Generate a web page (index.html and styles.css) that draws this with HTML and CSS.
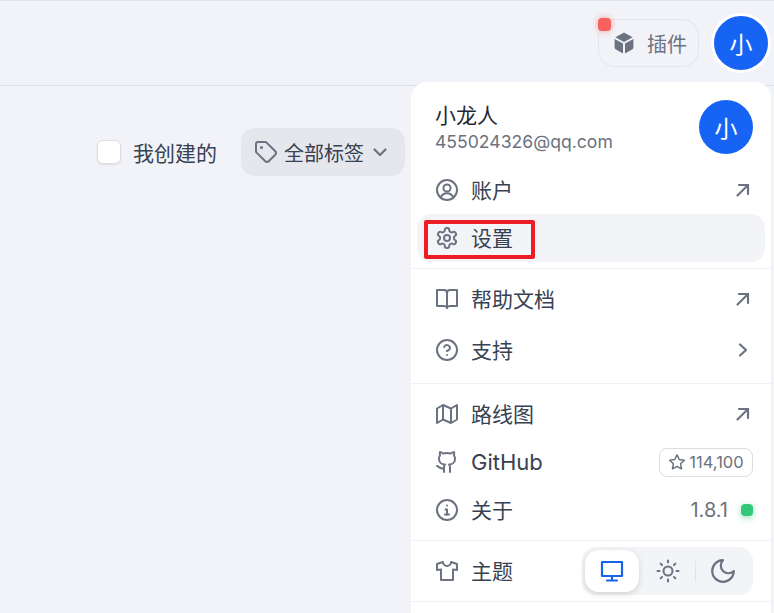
FILE: index.html
```html
<!DOCTYPE html>
<html lang="zh-CN">
<head>
    <meta charset="UTF-8">
    <meta name="viewport" content="width=device-width, initial-scale=1.0">
    <title>插件</title>
    <link rel="stylesheet" href="styles.css">
</head>
<body>

    <header class="topbar">
        <div class="plugin-btn">
            <span class="red-dot"></span>
            <svg class="icon" viewBox="0 0 24 24" fill="currentColor"><path d="M12 1.600 20.600 6.200 12 10.900 3.400 6.200Z"/><path d="M2.600 8 11 12.600V22.600L3.600 18.200a2 2 0 0 1-1-1.700Z"/><path d="M21.400 8 13 12.600V22.600L20.400 18.200a2 2 0 0 0 1-1.700Z"/></svg>
            <span>插件</span>
        </div>
        <div class="avatar avatar-ring">小</div>
    </header>

    <main class="filters">
        <label class="check">
            <span class="check-box"></span>
            <span>我创建的</span>
        </label>
        <div class="tag-btn">
            <svg class="icon" viewBox="0 0 24 24" fill="none" stroke="currentColor" stroke-width="2" stroke-linecap="round" stroke-linejoin="round"><path d="M12.600 2.600A2 2 0 0 0 11.200 2H4a2 2 0 0 0-2 2v7.200a2 2 0 0 0 .6 1.400l8.700 8.700a2.400 2.400 0 0 0 3.400 0l6.600-6.600a2.400 2.400 0 0 0 0-3.400z"/><circle cx="7.500" cy="7.500" r=".6" fill="currentColor"/></svg>
            <span>全部标签</span>
            <svg class="icon-small" viewBox="4 4 16 16" fill="none" stroke="currentColor" stroke-width="2.200" stroke-linecap="round" stroke-linejoin="round"><path d="m6.500 9.500 5.500 5.500 5.500-5.500"/></svg>
        </div>
    </main>

    <div class="menu">
        <div class="menu-head">
            <div class="user-text">
                <div class="user-name">小龙人</div>
                <div class="user-mail">455024326@qq.com</div>
            </div>
            <div class="avatar">小</div>
        </div>

        <div class="section section-first">
            <div class="row">
                <svg class="icon" viewBox="0 0 24 24" fill="none" stroke="currentColor" stroke-width="2" stroke-linecap="round" stroke-linejoin="round"><circle cx="12" cy="12" r="10"/><circle cx="12" cy="10" r="3.600"/><path d="M5.600 19.400a7 7 0 0 1 12.800 0"/></svg>
                <span class="label">账户</span>
                <svg class="icon-small" viewBox="4 4 16 16" fill="none" stroke="currentColor" stroke-width="2.200" stroke-linecap="round" stroke-linejoin="round"><path d="M6.500 17.500 17 7"/><path d="M8 7h9v9"/></svg>
            </div>
            <div class="row row-active">
                <svg class="icon" viewBox="0 0 24 24" fill="none" stroke="currentColor" stroke-width="2" stroke-linecap="round" stroke-linejoin="round"><path d="M12.220 2h-.44a2 2 0 0 0-2 2v.18a2 2 0 0 1-1 1.730l-.43.25a2 2 0 0 1-2 0l-.15-.08a2 2 0 0 0-2.730.73l-.22.38a2 2 0 0 0 .73 2.730l.15.1a2 2 0 0 1 1 1.720v.51a2 2 0 0 1-1 1.740l-.15.09a2 2 0 0 0-.73 2.730l.22.38a2 2 0 0 0 2.730.73l.15-.08a2 2 0 0 1 2 0l.43.25a2 2 0 0 1 1 1.730V20a2 2 0 0 0 2 2h.44a2 2 0 0 0 2-2v-.18a2 2 0 0 1 1-1.730l.43-.25a2 2 0 0 1 2 0l.15.08a2 2 0 0 0 2.730-.73l.22-.39a2 2 0 0 0-.73-2.730l-.15-.08a2 2 0 0 1-1-1.740v-.5a2 2 0 0 1 1-1.740l.15-.09a2 2 0 0 0 .73-2.730l-.22-.38a2 2 0 0 0-2.730-.73l-.15.08a2 2 0 0 1-2 0l-.43-.25a2 2 0 0 1-1-1.730V4a2 2 0 0 0-2-2z"/><circle cx="12" cy="12" r="3"/></svg>
                <span class="label">设置</span>
            </div>
            <span class="red-box"></span>
        </div>

        <div class="section section-help">
            <div class="row">
                <svg class="icon" viewBox="0 0 24 24" fill="none" stroke="currentColor" stroke-width="2" stroke-linejoin="round"><path d="M2 3h7a3 3 0 0 1 3 3v15a3 3 0 0 0-3-2H2z"/><path d="M22 3h-7a3 3 0 0 0-3 3v15a3 3 0 0 1 3-2h7z"/></svg>
                <span class="label">帮助文档</span>
                <svg class="icon-small" viewBox="4 4 16 16" fill="none" stroke="currentColor" stroke-width="2.200" stroke-linecap="round" stroke-linejoin="round"><path d="M6.500 17.500 17 7"/><path d="M8 7h9v9"/></svg>
            </div>
            <div class="row">
                <svg class="icon" viewBox="0 0 24 24" fill="none" stroke="currentColor" stroke-width="2" stroke-linecap="round" stroke-linejoin="round"><circle cx="12" cy="12" r="10"/><path d="M9.100 9a3 3 0 0 1 5.800 1c0 2-3 3-3 3"/><path d="M12 17h.01"/></svg>
                <span class="label">支持</span>
                <svg class="icon-small" viewBox="4 4 16 16" fill="none" stroke="currentColor" stroke-width="2.200" stroke-linecap="round" stroke-linejoin="round"><path d="m9 6.500 6 5.500-6 5.500"/></svg>
            </div>
        </div>

        <div class="section">
            <div class="row">
                <svg class="icon" viewBox="0 0 24 24" fill="none" stroke="currentColor" stroke-width="2" stroke-linejoin="round"><path d="M2 6.500 8 3l8 3.500L22 3v14.500L16 21l-8-3.500L2 21z"/><path d="M8 3v14.500"/><path d="M16 6.500V21"/></svg>
                <span class="label">路线图</span>
                <svg class="icon-small" viewBox="4 4 16 16" fill="none" stroke="currentColor" stroke-width="2.200" stroke-linecap="round" stroke-linejoin="round"><path d="M6.500 17.500 17 7"/><path d="M8 7h9v9"/></svg>
            </div>
            <div class="row">
                <svg class="icon" viewBox="0 0 24 24" fill="none" stroke="currentColor" stroke-width="2" stroke-linecap="round" stroke-linejoin="round"><path d="M15 22v-4a4.800 4.800 0 0 0-1-3.500c3 0 6-2 6-5.500.08-1.250-.27-2.480-1-3.500.28-1.150.28-2.350 0-3.500 0 0-1 0-3 1.500-2.640-.5-5.360-.5-8 0C6 2 5 2 5 2c-.3 1.150-.3 2.350 0 3.500A5.400 5.400 0 0 0 4 9c0 3.500 3 5.500 6 5.500-.39.490-.68 1.050-.85 1.650-.17.600-.22 1.230-.15 1.850v4"/><path d="M9 18c-4.510 2-5-2-7-2"/></svg>
                <span class="label label-latin">GitHub</span>
                <div class="stars">
                    <svg viewBox="0 0 24 24" fill="none" stroke="currentColor" stroke-width="2" stroke-linejoin="round"><path d="m12 2.500 3 6.200 6.800.9-5 4.700 1.300 6.800-6.100-3.300-6.100 3.300 1.300-6.800-5-4.700 6.800-.9z"/></svg>
                    <span>114,100</span>
                </div>
            </div>
            <div class="row">
                <svg class="icon" viewBox="0 0 24 24" fill="none" stroke="currentColor" stroke-width="2" stroke-linecap="round" stroke-linejoin="round"><circle cx="12" cy="12" r="10"/><path d="M10.500 11.500H12v5"/><path d="M10 16.500h4"/><path d="M12 7.500h.01"/></svg>
                <span class="label">关于</span>
                <span class="version">1.8.1</span>
                <span class="green-dot"></span>
            </div>
        </div>

        <div class="section">
            <div class="row">
                <svg class="icon" viewBox="0 0 24 24" fill="none" stroke="currentColor" stroke-width="2" stroke-linejoin="round"><path d="M8 3 2 5v6l4-.5V21h12V10.500l4 .5V5l-6-2a4 4 0 0 1-8 0z"/></svg>
                <span class="label">主题</span>
                <div class="theme-switch">
                    <div class="theme-btn theme-btn-on">
                        <svg viewBox="0 0 24 24" fill="none" stroke="currentColor" stroke-width="2.200" stroke-linecap="round" stroke-linejoin="round"><rect x="2" y="3" width="20" height="14"/><path d="M12 17v4"/><path d="M7 21.500h10"/></svg>
                    </div>
                    <div class="theme-btn theme-btn-sun">
                        <svg viewBox="0 0 24 24" fill="none" stroke="currentColor" stroke-width="2" stroke-linecap="round"><circle cx="12" cy="12" r="4.500"/><path d="M12 1.500v2M12 20.500v2M4.600 4.600 6 6M18 18l1.400 1.400M1.500 12h2M20.500 12h2M4.600 19.400 6 18M18 6l1.400-1.400"/></svg>
                    </div>
                    <span class="theme-sep"></span>
                    <div class="theme-btn">
                        <svg viewBox="2 2 20 20" fill="none" stroke="currentColor" stroke-width="1.800" stroke-linecap="round" stroke-linejoin="round"><path d="M12 3a6 6 0 0 0 9 9 9 9 0 1 1-9-9z"/></svg>
                    </div>
                </div>
            </div>
        </div>
        <div class="section section-last"></div>
    </div>

</body>
</html>
```

FILE: styles.css
```css
* { box-sizing: border-box; }

html, body {
    height: 613px;
    overflow: hidden;
}

body {
    margin: 0;
    position: relative;
    background: #f2f3f8;
    color: #374151;
    font-family: Inter, "Noto Sans CJK SC", sans-serif;
    font-size: 20px;
}

.icon {
    width: 24px;
    height: 24px;
    flex: none;
    color: #6b7280;
}

.icon-small {
    width: 16px;
    height: 16px;
    flex: none;
    color: #6b7280;
}

/* top bar */
.topbar {
    height: 86px;
    padding: 12px 3px 0 0;
    display: flex;
    justify-content: flex-end;
    align-items: flex-start;
    gap: 12px;
    border-top: 1px solid #e3e4e8;
    border-bottom: 1px solid #dfe0e5;
}

.plugin-btn {
    position: relative;
    width: 101px;
    height: 48px;
    margin-top: 6px;
    padding-left: 13px;
    display: flex;
    align-items: center;
    gap: 11px;
    border: 1px solid #e4e5ea;
    border-radius: 16px;
    color: #6b7280;
}

.red-dot {
    position: absolute;
    left: -1px;
    top: -2px;
    width: 13px;
    height: 13px;
    border-radius: 4px;
    background: #f8615f;
    box-shadow: 0 0 6px rgba(248, 97, 95, 0.6);
}

.avatar {
    width: 54px;
    height: 54px;
    flex: none;
    display: flex;
    align-items: center;
    justify-content: center;
    border-radius: 50%;
    background: #1764f4;
    color: #fff;
    font-size: 23px;
}

.avatar-ring {
    width: 60px;
    height: 60px;
    border: 3px solid #fff;
}

/* filters */
.filters {
    margin-top: 42px;
    padding-right: 369px;
    display: flex;
    justify-content: flex-end;
    align-items: center;
    gap: 24px;
}

.check {
    display: flex;
    align-items: center;
    gap: 12px;
    font-size: 21px;
}

.check-box {
    width: 24px;
    height: 24px;
    background: #fff;
    border: 1px solid #dcdde2;
    border-radius: 6px;
    box-shadow: 0 1px 2px rgba(0, 0, 0, 0.08);
}

.tag-btn {
    width: 164px;
    height: 48px;
    padding-left: 13px;
    display: flex;
    align-items: center;
    gap: 6px;
    background: #e5e7ec;
    border-radius: 14px;
}

.tag-btn .icon-small { margin-left: 2px; }

/* dropdown */
.menu {
    position: absolute;
    top: 82px;
    right: 3px;
    bottom: -30px;
    width: 360px;
    background: #fff;
    border-radius: 16px 16px 0 0;
}

.menu-head {
    height: 84px;
    padding: 18px 18px 0 24px;
    display: flex;
    justify-content: space-between;
}

.user-name {
    color: #1f2937;
    font-size: 21px;
    line-height: 32px;
}

.user-mail {
    margin-top: -1px;
    color: #6b7280;
    font-size: 17.600px;
    line-height: 22px;
}

.section {
    position: relative;
    padding: 6px;
    border-bottom: 1px solid #f1f2f5;
}

.section-first { padding-top: 0; }
.section-help { padding-bottom: 9px; }
.section-help .row + .row { margin-top: 3px; }
.section-last { border: none; }

.row {
    height: 48px;
    padding: 0 15px 0 18px;
    display: flex;
    align-items: center;
    border-radius: 14px;
}

.row-active { background: #f3f4f8; }

.row > .icon-small { margin-right: -1px; }

.label {
    flex: 1;
    margin-left: 12px;
    margin-bottom: 2px;
    font-size: 21px;
}

.label-latin {
    margin-bottom: 0;
    font-size: 22px;
}

.red-box {
    position: absolute;
    left: 13px;
    top: 54px;
    width: 111px;
    height: 39px;
    border: 4px solid #ee1c25;
    border-radius: 2px;
}

.stars {
    width: 94px;
    height: 29px;
    margin-right: -3px;
    display: flex;
    align-items: center;
    justify-content: center;
    gap: 3px;
    border: 1px solid #dcdde2;
    border-radius: 8px;
    color: #6b7280;
    font-size: 16.500px;
}

.stars svg {
    width: 18px;
    height: 18px;
}

.version {
    margin-right: 13px;
    color: #6b7280;
    font-size: 20px;
}

.green-dot {
    width: 12px;
    height: 12px;
    margin-right: -3px;
    border-radius: 4px;
    background: #34c77b;
    box-shadow: 0 2px 6px rgba(52, 199, 123, 0.5);
}

.theme-switch {
    width: 171px;
    height: 48px;
    margin-right: -3px;
    padding: 3px;
    display: flex;
    align-items: center;
    background: #f3f4f8;
    border-radius: 14px;
}

.theme-btn {
    width: 54px;
    height: 42px;
    display: flex;
    align-items: center;
    justify-content: center;
    border-radius: 14px;
    color: #6b7280;
}

.theme-btn svg {
    width: 24px;
    height: 24px;
}

.theme-btn-sun { margin-left: 2px; }

.theme-btn-on {
    background: #fff;
    color: #1764f4;
    box-shadow: 0 2px 6px rgba(0, 0, 0, 0.14);
}

.theme-sep {
    width: 1px;
    height: 21px;
    background: #e2e3e8;
}
```
